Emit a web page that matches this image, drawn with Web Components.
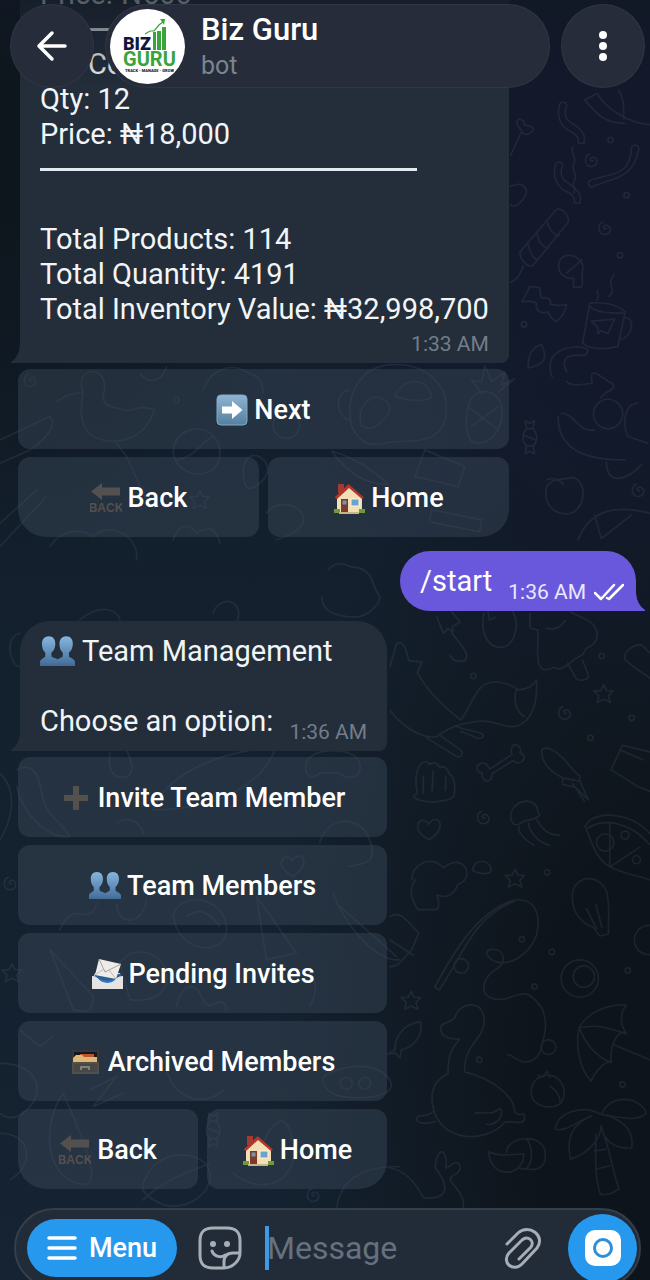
<!DOCTYPE html>
<html lang="en">
<head>
<meta charset="utf-8">
<meta name="viewport" content="width=device-width, initial-scale=1">
<title>Biz Guru</title>
<style>
    html, body {
        margin: 0;
        height: 100%;
        overflow: hidden;
        background: #111a25;
    }
    body {
        font-family: Roboto, "Noto Sans", sans-serif;
        color: #f2f5f8;
    }
    .indent { padding-left: 48px; }
    .emoji-line {
        display: flex;
        align-items: center;
        gap: 7px;
    }
</style>
</head>
<body>
<chat-screen>
    <chat-header slot="header" data-name="Biz Guru" data-status="bot"></chat-header>

    <message-group>
        <message-bubble data-time="1:33 AM">
            <div>Price: ₦500</div>
            <text-rule></text-rule>
            <div class="indent">Co</div>
            <div>Qty: 12</div>
            <div>Price: ₦18,000</div>
            <text-rule></text-rule>
            <br>
            <div>Total Products: 114</div>
            <div>Total Quantity: 4191</div>
            <div>Total Inventory Value: ₦32,998,700</div>
        </message-bubble>
        <key-row slot="keys"><key-button data-icon="next">Next</key-button></key-row>
        <key-row slot="keys" last>
            <key-button data-icon="back">Back</key-button>
            <key-button data-icon="home">Home</key-button>
        </key-row>
    </message-group>

    <message-group out>
        <message-bubble data-time="1:36 AM" out><div slot="last">/start</div></message-bubble>
    </message-group>

    <message-group>
        <message-bubble data-time="1:36 AM" first>
            <div class="emoji-line"><emoji-icon data-name="people" large></emoji-icon>Team Management</div>
            <br>
            <div slot="last">Choose an option:</div>
        </message-bubble>
        <key-row slot="keys"><key-button data-icon="plus">Invite Team Member</key-button></key-row>
        <key-row slot="keys"><key-button data-icon="people">Team Members</key-button></key-row>
        <key-row slot="keys"><key-button data-icon="mail">Pending Invites</key-button></key-row>
        <key-row slot="keys"><key-button data-icon="archive">Archived Members</key-button></key-row>
        <key-row slot="keys" last>
            <key-button data-icon="back">Back</key-button>
            <key-button data-icon="home">Home</key-button>
        </key-row>
    </message-group>

    <chat-composer slot="composer"></chat-composer>
</chat-screen>

<script>
    const EMOJI = {
        next: `
            <defs><linearGradient id="n" x2="0" y2="1"><stop stop-color="#8fb4d3"/><stop offset="1" stop-color="#54809f"/></linearGradient></defs>
            <rect x="1" y="1" width="30" height="30" rx="4" fill="url(#n)" stroke="#86a9c6"/>
            <path d="M6 12.500h10V7l10.500 9L16 25v-5.500H6z" fill="#fff"/>`,
        back: `
            <path d="M1 9.500 12 1v4.500h18v8H12V18z" fill="#54504f"/>
            <text x="16" y="30" text-anchor="middle" font-family="Liberation Sans Narrow, Liberation Sans" font-weight="bold" font-size="12" fill="#54504f">BACK</text>`,
        home: `
            <path d="M5 2h6v9H5z" fill="#a33a30"/>
            <path d="M4 15 16 4l13 11v15H4z" fill="#f3dfb6"/>
            <path d="M1.500 15.500 15.500 2 31 15.500l-2 1.500L16 6 4 17z" fill="#b3352c"/>
            <path d="M8 17h7v13H8z" fill="#7c3a2b"/><path d="M9.500 18.500h4v4h-4z" fill="#6f97b3"/>
            <path d="M17.500 16.500h9v8h-9z" fill="#fff3d8"/><path d="M18.500 17.500h7v6h-7z" fill="#6aa3cf"/>
            <path d="M1 27h6v4H1zm25 0h6v4h-6z" fill="#6f9a3c"/><path d="M6 30h20v2H6z" fill="#c9b48a"/>`,
        plus: `<path d="M13 4h6v9h9v6h-9v9h-6v-9H4v-6h9z" fill="#54504b"/>`,
        people: `
            <defs><linearGradient id="p" x2="0" y2="1"><stop stop-color="#86b6df"/><stop offset="1" stop-color="#446d99"/></linearGradient></defs>
            <g fill="url(#p)"><path d="M24 2c-4.500 0-6.500 3.500-6.200 7.500.2 3.500 1.200 6 3 7.500v3.500c-1.500 1.500-5 2-6.800 4.500V29h18v-3.500c-.5-3-4.500-3.500-5.500-5V17c2-1.500 3.200-4 3.500-7.500C30.300 5 28 2 24 2z"/>
            <path d="M8 2c-4.500 0-6.500 3.500-6.200 7.500.2 3.500 1.200 6 3 7.500v3.500C3.500 22.500 0 22.500 0 26v3h17.500v-4c-1-3-5.500-3-7-4.500V17c2-1.500 3.200-4 3.500-7.500C14.300 5 12 2 8 2z"/></g>
            <path d="M0 27h32v2H0z" fill="#446d99"/>`,
        mail: `
            <path d="M4 15h25l3 7v9H1v-9z" fill="#d5d5d3"/><path d="M4 16h26v7H3z" fill="#2d5f93"/>
            <path d="m8 1 22 5-5 15L4 17z" fill="#eeeceb"/><path d="m8 1 6 13L30 6" fill="none" stroke="#a5a19c"/><path d="m4 17 9-6m5 1 7 9" stroke="#bdb9b4"/>
            <path d="M1 18c5 0 6 3 8 4 4 3 10 3 14 0 2-1 4-4 9-4v13H1z" fill="#e5e4e2"/><path d="M7 20c5 3 12 4 18 0-2 6-14 7-18 0z" fill="#2e78c4"/>`,
        archive: `
            <path d="M2 4h27v24H2z" fill="#34383b"/><path d="M4 6h23v5H4z" fill="#15191c"/>
            <path d="M10 8h14v5H10z" fill="#c1532c"/><path d="M3 12l3-3h6l2 2h13v6H3z" fill="#dfb878"/><path d="M2 16h27v12H2z" fill="#514f4b"/>
            <path d="M4 18h23v8H4z" fill="#474744"/><path d="M11 24v-3h8v3" fill="none" stroke="#97928a" stroke-width="1.500"/>`
    };

    function setup(el, css, html) {
        el.attachShadow({ mode: "open" });
        el.shadowRoot.innerHTML = `<style>${css}</style>${html}`;
    }

    class EmojiIcon extends HTMLElement {
        connectedCallback() {
            setup(this, `
                :host { display: block; flex: none; width: 32px; height: 32px; }
                :host([large]) { width: 35px; height: 35px; }
                svg { display: block; width: 100%; height: 100%; }
            `, `<svg viewBox="0 0 32 32" aria-hidden="true">${EMOJI[this.dataset.name]}</svg>`);
        }
    }

    /* the line drawn between two products, as tall as a line of text */
    class TextRule extends HTMLElement {
        constructor() {
            super();
            setup(this, `
                :host { display: flex; align-items: center; height: 35px; }
                hr { flex: none; width: 84%; height: 3px; margin: 0; border: 0; background: #e3e9ee; }
            `, `<hr>`);
        }
    }

    class ChatWallpaper extends HTMLElement {
        constructor() {
            super();
            setup(this, `
                :host {
                    display: block;
                    background:
                        radial-gradient(ellipse 50% 34% at 0% 10%, #0e161d 20%, transparent),
                        radial-gradient(ellipse 60% 50% at 100% 10%, #13182b 30%, transparent),
                        radial-gradient(ellipse 60% 60% at 100% 85%, #0e141b 30%, transparent),
                        linear-gradient(#121b2a, #13202d 50%, #152332);
                }
                svg { display: block; width: 100%; height: 100%; fill: none; stroke: #6d7b98; stroke-width: 5; stroke-linecap: round; stroke-linejoin: round; opacity: .15; }
            `, `
            <svg viewBox="0 0 650 1280" preserveAspectRatio="xMidYMid slice" aria-hidden="true">
                <defs>
                    <path id="swirl" d="M5 2c-6 4-12-5-4-9s18 4 16 15-22 17-30 6-4-28 8-31"/>
                    <path id="star" d="m0-28 8 18 20 1-14 15 6 20-20-10-20 10 5-20-15-15 21-1z"/>
                    <path id="heart" d="M0 30c-22-12-40-28-34-46s26-14 32 0c8-18 30-20 34-4S22 16 0 30z"/>
                    <circle id="dot" r="8"/>
                    <path id="bone" d="m-40 34 66-44c-6-20 4-34 16-28s12 18 8 24c14 2 18 18 4 26s-20 0-24-4l-64 40c2 18-12 26-22 18s-8-16-6-20c-18-2-22-20-8-28s24 4 30 16z"/>
                    <path id="fish" d="M-40 50c-4-30 20-80 76-84 8 40-20 76-58 84l-4 24-14-14-22 2z"/>
                    <path id="ribbon" d="M-30-50c0-16 22-14 22 0-16 40 14 48 34 64s22 30 18 48h-16c0-20-6-26-26-36s-42-36-32-76z"/>
                    <path id="candy" d="m-14-50 14 8 14-8-4 24c16 20 12 40 0 52l4 24-14-8-14 8 4-24c-14-14-14-34 0-52zm4 24h20m-24 22 28 10m-24 20h20"/>
                </defs>
                <g transform="translate(390 610) scale(.333)">
                    <path d="M140 20l20 50 14-14 14 10 0-16 22-14-24-30M186 70c20 26 48 54 44 72s-40 16-50-6M282 10c-12 60 12 102 50 102s62-60 36-110M294 0l4 30 20-8M420 10v44l24 6c2 40-6 80 4 104s34 14 44 8c20 14 34-4 60-22s26-10 36-34c50-20 44-70-8-92l-38-18M470 54c26 10 46-6 56-22M534 160l24 44c12 14 40 4 38-8l-18-46"/>
                    <path d="M0 170l20-70c20-10 30 20 36 52l40 4-14 32c40 70 90 110 130 142 20-20 30-60 58-94s84-18 116 4c24-2 44-8 54-30 4 70-14 120-52 136s-74-18-122-12-70 12-90 24-30 14-34 22c-50 10-110-36-142-78M380 240c-12 30 2 70 24 80M110 384l90 56c18 6 20-14 12-20l-60-42M196 348c30 14 40 10 70 20s6 22-10 14l-44-18"/>
                    <use href="#bone" x="340" y="444"/><use href="#star" x="642" y="252"/><use href="#swirl" x="524" y="308"/><use href="#swirl" x="280" y="622"/><use href="#heart" x="118" y="660"/><use href="#star" x="376" y="806"/>
                    <path d="M82 550c-10-44 0-80 14-90s20 0 22 4c14-12 28 0 30 8 18-4 26 6 28 18 18 8 22 40 16 70-20 18-80 20-106 10s-10-14-4-20zm18 0v-50m26 44 4-60m36 58 2-40"/>
                    <path d="M456 420c20-20 60 20 80 44s22 26 34 34v16l26 56-40-38-38-8v-20c-50-26-66-58-62-84zm62 84 50 10m-20 6 36 54"/>
                    <path d="M364 630c-10-40 40-72 70-48 16 16 4 22 16 34-20 20-50 12-56 24-14 8-24 8-30-10zm24 20c-8 20 30 50 44 56m-16-66c0 24 30 60 64 66m-40-78c10 20 30 50 70 48"/>
                    <path d="M706 150c-6-20 14-44 48-46l26 24M706 150l30 24 44 30M664 480l34-74 82 20M664 480l80 50 36 14M690 420l70 30"/>
                    <path d="M586 650c24-50 130-46 194 20M586 650c14 30 30 100 76 122 40 20 80 26 118 38M596 654c40-26 120-24 184 50M660 642v130l90-60"/><circle cx="646" cy="698" r="26"/><circle cx="706" cy="676" r="12"/><circle cx="740" cy="750" r="12"/>
                    <path d="M66 810c0-50 60-74 94-36 60-50 100 30 44 50-14 40-44 40-64 32 10 20 6 40 0 44H84c-20-30-30-60-8-90M248 780c6-34 50-34 56 0 0 20-50 10-56 0z"/>
                    <use href="#dot" x="250" y="198"/><use href="#dot" x="602" y="384"/><use href="#dot" x="726" y="324"/><use href="#dot" x="472" y="788"/><use href="#dot" x="636" y="138"/>
                </g>
                <g transform="translate(390 900) scale(.333)">
                    <path d="M134 262c60-110 130-230 240-262 80-10 80 80 60 120s-60 70-100 68-60-40-26-40 46 40 10 60-60 80 0 90 80-60 140 30c20 60 0 90-4 116s-30 50-60 40-24-20-42-20M134 262l14 8c70-100 100-220 226-266"/><circle cx="214" cy="198" r="22"/><circle cx="476" cy="442" r="22"/>
                    <path d="M548-20c-6 60 32 92 62 102l20 26 26-6v-30c0-40 4-50-4-92-20-64-98-54-104 0zM590 26l30 60m-2-74 18 70"/><circle cx="570" cy="236" r="56"/><circle cx="582" cy="230" r="32"/><circle cx="778" cy="120" r="44"/>
                    <path d="M152 386c0-20 30-16 44-34 6-40 80-60 86 4s-60 70-58 160c80 20 150 70 150 120 20 20 30-8 30 18s-40 6-60 14c-60 70-220 60-218-80 6-40 20-50 48-66 0-60 10-70 34-104-30 0-56-6-56-32zm-24 250c-20 20-50 4-48 22s40 12 56 8M256 640c20-6 50 10 74-14 14 10 0 50-40 48"/>
                    <path d="M568 384c20-40 80-74 142-68-20 20-20 60 0 84-20-10-50 20-46 88-20-6-50 30-60 56-30-30-50-100-36-160zm0 0c50-12 90 0 142 18M568 384c24 60 60 90 96 104M670 434l110 46"/>
                    <path d="M424 576c0-50 60-60 80-40s26 50 10 72-90 20-90-32zm20-50 14 6 14-18 8 18M480 560c20 10 30 30 32 50"/>
                    <path d="M634 644c-50-30-130-10-138 44 30 10 60-20 110-40-50 20-80 60-64 130 40-10 90-50 92-100 10 60 60 70 92 66 10-60-40-90-90-100 20-60 110-60 134-4-30 30-90 10-134 4zm-16 60c0 70-4 130 14 180 30 0 30 0 56-16-20-50-20-90-46-164m-28 50 34-6m-28 60 40-10"/>
                    <path d="M296 756c30 14 70 10 106 6 0 70-100 80-106-6zm54 2c0-50 110-60 116 0s-40 54-76 48m20-90c20 30 20 70 0 90M0 804c50 10 80 50 100 90 100 10 60-60 36-90 0-30 20-70 30-34 10 20-10 50 14 28s44 4 20 24c-30 14-20 20 0 44s22 40 20 60"/>
                    <use href="#star" x="64" y="302"/><use href="#fish" x="56" y="400"/><path d="M0 50c30-20 50 10 86 50-20 40-10 40-30 60s-30 40-56 40M0 120l70 46"/>
                    <use href="#dot" x="396" y="118"/><use href="#dot" x="434" y="260"/><use href="#dot" x="268" y="480"/><use href="#dot" x="486" y="156"/><use href="#dot" x="714" y="212"/><use href="#dot" x="698" y="554"/>
                </g>
                <g transform="translate(490 90) scale(.333)">
                    <path d="M62 196l34-74c-20-16-18-36-6-34s14 8 12 16c20 4 40 10 20 24s-20-4-24 2M62 290c40-20 60 10 36 40s-36 14-36 14"/>
                    <use href="#ribbon" x="238" y="98"/><use href="#ribbon" x="226" y="278"/><path d="M250 170c-14 20 14 30 2 50s14 30 2 50 6 30-2 40M426 170c14-10 24 0 20 12-20 90-80 80-140 110-20-10-10-20 4-24 80-20 110-20 116-98zM284 30l38-20c20 40 90 90 158 94M284 30c30 30 50 70 120 70M386 0c20 30 14 60 16 86"/>
                    <path d="M90 486 200 358c24-4 40 26 34 40L128 528c-20 4-38-20-38-42zm24-30c0 20 14 50 28 54m0-84c0 30 20 50 34 48m-4-84c0 20 20 50 36 46M100 528c-10 30-20 40-38 50"/>
                    <path d="M206 530c0-50 70-40 74 4-10 20 4 40-6 58h-24l2-26c-24 0-46-10-46-36zm24 20 46-40M96 636l24-46 30 4c0 20 0 20 4 30 30-4 30 10 26 20 20 0 20 8 50 0-4 26-16 40-30 52-20-10-20-20-26-30-20 8-40-4-34-26-14-10-20-4-44-4zM300 640l-22 120c20 20 70 20 106 10l22-104c-26-24-70-30-106-26zm0 10c20 20 60 20 100 20m6 14c34 0 20 60-16 66M304 694l70-6-20 44-20-10-10 10v-20zM356 620c30-20-10-30 16-66M320 630c14-20-4-14 4-30"/>
                    <use href="#swirl" x="304" y="210"/><use href="#swirl" x="344" y="414"/><use href="#dot" x="362" y="150"/><use href="#dot" x="410" y="316"/><use href="#dot" x="390" y="496"/><use href="#dot" x="102" y="704"/>
                </g>
                <g transform="translate(325 340) scale(.333)">
                    <path d="M80 260c-20-90 20-180 120-186s170 60 164 140-60 90-130 90-110 40-154-44zm30 0c-20-60 30-100 60-86s30 40 10 60-30 40-70 26zm100-90c20-60 100-60 110 0-20 20-80 10-110 0M70 150c-40 10-40 70 0 90"/>
                    <path d="M430 200c10-60 90-60 100 0s-30 110-70 110-40-60-30-110zm10 60 80-60m-90 0 90 70M470 160l-30-40 30 6 10-50 20 50 40-30-10 40 40-20-50 40"/>
                    <path d="M682 110c-30-80 60-100 104-84 8 10 0 18-10 20-50-4-70 10-50 50M610 84c0-40 10-60 40-70 20 40 10 60-40 70M726 124c10 16 40 10 76 6-10-60 20-20 60 0 20 20-20 20-34 44M700 230c0 100 80 130 200 130M710 220c40 0 50 60 100 50"/><circle cx="850" cy="222" r="44"/><path d="M940 190c-40 0-50 60-30 100l60 20M845 365c0 80 70 50 105 10"/>
                    <use href="#candy" x="615" y="292"/><path d="M666 440c20-30 60-20 80-28 50 20 30 110-20 110s-70-40-60-82zm0-20c20-10 40 0 50 14M760 600c30-80 100-110 215-80M810 526l20 70 90-70"/><use href="#swirl" x="940" y="450"/>
                    <path d="M20 334c80 20 150 80 170 100-60 0-120-30-170-100zM300 330l120 50-20 60-130-30zM320 510l150 30-6 36-150-30zM10 690c30-40 70 0 80-8 60 10 50 60 70 80s-30 70-70 70-100-10-100-60"/>
                </g>
                <g transform="translate(0 340) scale(.333)">
                    <path d="M170 186c40-30 60-24 80-30-30-70 70-90 64-6-20 60 40 50 60 60s40-20 90 0c-20 60-60 90-120 94-100 0-110-70-94-150M350 310l30 40 60 130M420 100c30 40 70 20 80-20M520 340c0-90 130-100 140-10s-120 100-140 10zm10 20c60-10 80-60 110-70M610 150c20-60 80-80 120-60s60 20 60 70M0 300l150-70c20 20 0 60-60 100L0 370M-10 560l120-110M0 620l140-150M150 620c40-60 100-50 130-30 50-50 140 0 130 70M520 600c20-60 60-40 70-20 30-20 60-20 70 30M730 390c10-90 110-20 60 30s-60 20-60-30zM800 520c30-40 100-30 110 10s-50 60-80 70"/>
                    <use href="#swirl" x="90" y="120"/><use href="#star" x="600" y="480"/><use href="#dot" x="530" y="180"/><circle cx="860" cy="255" r="40"/>
                </g>
                <g transform="translate(0 610) scale(.333)">
                    <path d="M50 480c60-30 70 40 80 90s60 70 80 110c-60 10-140-60-160-150M330 430c-10 60 20 80 50 70s10-60 0-80M460 600c30-90 160-170 370-190-40 110-170 190-370 190zM920 460c10-50 150-50 160 0s-40 50-60 30h-60c-20 20-50 10-40-30zM350 640c30-20 70-10 80 30M960 700c20-80 120-90 150-10s-30 70-60 80M0 490c60 60 30 150 0 200M60 70c-50 10-30 100 0 100M240 30c70-60 120-20 120 0M640 10c20-60 100-40 70 30"/>
                    <path d="M180 960c40-100 90 0 110-80M350 880c0 70 80 70 90-10M520 920c20-80 150-60 160 30s-140 90-160-30zm40 0c40-30 70-10 100 30M770 860l120 170-90 20zM1000 850c50 130 150 210 200 200M1010 880l180 160M150 1020l130 140c0 50-20 50-60 40zM360 1060c40-60 130-30 140 30s-40 90-110 80zM900 1080c50 0 60 60 30 110M530 1190c20-80 60-70 80-20s60-30 70 30"/>
                    <use href="#swirl" x="30" y="820"/><use href="#star" x="36" y="1090"/><use href="#heart" x="880" y="770"/>
                </g>
                <g transform="translate(0 1030) scale(.333)">
                    <path d="M0 100c100 0 140 70 90 130S0 250 0 250M60 0l60 50 40-30M190 190c-60 80-60 240 40 270s10-150-40-270zM270 180l80-40-70 90 90-40M500 110c10 90 110 130 170 70M990 130c60-30 150-30 180 20s-80 60-140 50-80-60-40-70zM0 310c90 0 110 90 30 140M440 440c40-90 180-80 190-10s-90 120-150 90-60-50-40-80M700 430c80 70 200 30 180-90s-70-50-90 0M1010 540c10-80 60-130 190-130M430 510c60-60 130-80 200-110"/>
                    <use href="#swirl" x="940" y="495"/><use href="#candy" x="640" y="300"/><circle cx="1040" cy="160" r="18"/><circle cx="1095" cy="160" r="18"/>
                </g>
            </svg>`);
        }
    }

    class ChatScreen extends HTMLElement {
        constructor() {
            super();
            setup(this, `
                :host { display: flex; flex-direction: column; position: relative; height: 100vh; overflow: hidden; isolation: isolate; }
                chat-wallpaper { position: absolute; inset: 0; z-index: -1; }
                .header { position: absolute; top: 0; left: 0; right: 0; z-index: 2; }
                main {
                    flex: 1;
                    min-height: 0;
                    display: flex;
                    flex-direction: column;
                    justify-content: flex-end;
                    padding: 0 14px 19px 18px;
                }
            `, `
                <chat-wallpaper></chat-wallpaper>
                <div class="header"><slot name="header"></slot></div>
                <main><slot></slot></main>
                <slot name="composer"></slot>
            `);
        }
    }

    class ChatHeader extends HTMLElement {
        connectedCallback() {
            setup(this, `
                :host {
                    display: flex;
                    gap: 11px;
                    padding: 4px 5px 0 10px;
                    background: linear-gradient(rgba(17, 24, 36, .7), transparent);
                }
                button, .title {
                    box-sizing: border-box;
                    height: 84px;
                    border: 1px solid rgba(255, 255, 255, .05);
                    border-radius: 42px;
                    background: #262c39;
                }
                button { display: flex; align-items: center; justify-content: center; flex: none; width: 84px; padding: 0; color: #fff; }
                .title { flex: 1; min-width: 0; display: flex; align-items: center; gap: 16px; padding-left: 4px; }
                .logo { flex: none; width: 75px; height: 75px; }
                .names { padding-top: 4px; }
                h1, p { margin: 0; font-size: 31px; line-height: 36px; font-weight: 500; color: #fff; }
                p { font-size: 25px; font-weight: 400; color: #7b8491; }
            `, `
                <button type="button" aria-label="Go back">
                    <svg width="32" height="32" viewBox="0 0 32 32" fill="none" stroke="currentColor" stroke-width="3.500" stroke-linecap="round" stroke-linejoin="round"><path d="M29 16H3M16 3 3 16l13 13"/></svg>
                </button>
                <div class="title">
                    <svg class="logo" viewBox="0 0 75 75" role="img" aria-label="Logo">
                        <circle cx="37.500" cy="37.500" r="37.500" fill="#fff"/>
                        <path d="M43 23h3v18h-3zm4-1h4v19h-4zm5-4h4v23h-4z" fill="#39a43b"/>
                        <path d="m35 25 5-3 4 0 5-6 5-4" fill="none" stroke="#39a43b" stroke-width="1.200"/><path d="m50 10 5 0-1 6z" fill="#39a43b"/>
                        <text x="13" y="41" font-family="Roboto" font-weight="900" font-size="18" fill="#13183a">BIZ</text>
                        <text x="13" y="57" font-family="Roboto" font-weight="700" font-size="20" fill="#39a43b">GURU</text>
                        <text x="15" y="63" font-family="Roboto" font-weight="900" font-size="4" fill="#222">TRACK - MANAGE - GROW</text>
                    </svg>
                    <div class="names"><h1>${this.dataset.name}</h1><p>${this.dataset.status}</p></div>
                </div>
                <button type="button" aria-label="More">
                    <svg width="8" height="30" viewBox="0 0 8 30" fill="currentColor"><circle cx="4" cy="4" r="4"/><circle cx="4" cy="15" r="4"/><circle cx="4" cy="26" r="4"/></svg>
                </button>
            `);
        }
    }

    class MessageGroup extends HTMLElement {
        constructor() {
            super();
            setup(this, `
                :host { display: block; flex: none; width: fit-content; margin-top: 10px; }
                :host([out]) { align-self: flex-end; margin-top: 14px; }
                .keys { display: flex; flex-direction: column; gap: 8px; margin-top: 6px; }
                :host([out]) .keys { display: none; }
            `, `<slot></slot><div class="keys"><slot name="keys"></slot></div>`);
        }
    }

    class MessageBubble extends HTMLElement {
        connectedCallback() {
            const out = this.hasAttribute("out");
            const ticks = `<svg class="ticks" width="30" height="20" viewBox="0 0 30 20" fill="none" stroke="#fff" stroke-width="2.500" stroke-linecap="round" stroke-linejoin="round"><path d="m1 11 6 6L20 3M13 16l2 1L29 3"/></svg>`;
            setup(this, `
                :host {
                    --bubble: #232e3a;
                    display: block;
                    position: relative;
                    margin-left: 2px;
                    padding: 13px 20px 7px;
                    border-radius: 8px 8px 8px 0;
                    background: var(--bubble);
                    font-size: 29px;
                    line-height: 35px;
                    white-space: nowrap;
                }
                :host([first]) { border-radius: 30px 30px 8px 0; }
                :host([out]) {
                    --bubble: #6a58dc;
                    margin: 0;
                    padding-right: 12px;
                    border-radius: 30px 30px 0 30px;
                    color: #fff;
                }
                .last { display: flex; align-items: flex-end; gap: 16px; padding-top: 5px; }
                ::slotted([slot="last"]) { margin: -5px 0 5px; }
                .meta { display: flex; align-items: center; gap: 8px; margin-left: auto; font-size: 21px; line-height: 24px; color: #727d89; }
                :host([out]) .meta { color: #ebe8ff; }
                /* the tail hangs outside the corner of the bubble */
                .tail { position: absolute; bottom: 0; right: 100%; fill: var(--bubble); }
                :host([out]) .tail { right: auto; left: 100%; transform: scaleX(-1); }
            `, `
                <slot></slot>
                <div class="last">
                    <slot name="last"></slot>
                    <div class="meta"><time>${this.dataset.time}</time>${out ? ticks : ""}</div>
                </div>
                <svg class="tail" width="9" height="20" viewBox="0 0 9 20"><path d="M9 2v18H0v-1Q8 14 9 2z"/></svg>
            `);
        }
    }

    class KeyRow extends HTMLElement {
        constructor() {
            super();
            setup(this, `
                :host { display: grid; grid-auto-flow: column; grid-auto-columns: 1fr; gap: 9px; }
                :host([last]) ::slotted(:first-child) { --bottom-left: 28px; }
                :host([last]) ::slotted(:last-child) { --bottom-right: 28px; }
            `, `<slot></slot>`);
        }
    }

    class KeyButton extends HTMLElement {
        connectedCallback() {
            setup(this, `
                :host { display: block; }
                button {
                    display: flex;
                    align-items: center;
                    justify-content: center;
                    gap: 6px;
                    box-sizing: border-box;
                    width: 100%;
                    height: 80px;
                    padding: 2px 0 0;
                    border: 0;
                    border-radius: 12px 12px var(--bottom-right, 12px) var(--bottom-left, 12px);
                    background: rgba(62, 76, 92, .42);
                    font: 500 27px Roboto, "Noto Sans", sans-serif;
                    color: #fff;
                    white-space: nowrap;
                }
            `, `<button type="button"><emoji-icon data-name="${this.dataset.icon}"></emoji-icon><span><slot></slot></span></button>`);
        }
    }

    class ChatComposer extends HTMLElement {
        constructor() {
            super();
            setup(this, `
                :host {
                    display: flex;
                    align-items: center;
                    flex: none;
                    box-sizing: border-box;
                    height: 80px;
                    margin: 0 9px -8px 14px;
                    padding: 0 2px 0 11px;
                    border: 2px solid #353f4a;
                    border-radius: 40px;
                    background: #222c39;
                }
                button { display: flex; align-items: center; justify-content: center; flex: none; padding: 0; border: 0; background: none; color: #a8adb6; }
                .menu {
                    gap: 12px;
                    width: 150px;
                    height: 58px;
                    margin-right: 21px;
                    border-radius: 29px;
                    background: #2699ee;
                    font: 500 27px Roboto, "Noto Sans", sans-serif;
                    color: #fff;
                }
                .camera { width: 69px; height: 69px; margin-left: 26px; border-radius: 50%; background: #2699ee; }
                label { display: flex; align-items: center; flex: 1; min-width: 0; margin-left: 23px; }
                .caret { flex: none; width: 4px; height: 44px; margin-right: -2px; background: #3d9be6; }
                input { flex: 1; min-width: 0; padding: 0; border: 0; outline: 0; background: none; font: 32px Roboto, "Noto Sans", sans-serif; color: #fff; }
                input::placeholder { color: #66717f; opacity: 1; }
            `, `
                <button class="menu" type="button">
                    <svg width="30" height="24" viewBox="0 0 30 24" stroke="currentColor" stroke-width="3.500" stroke-linecap="round"><path d="M2 2h26M2 12h26M2 22h26"/></svg>
                    <span>Menu</span>
                </button>
                <button type="button" aria-label="Stickers">
                    <svg width="44" height="44" viewBox="0 0 44 44" fill="none" stroke="currentColor" stroke-width="3" stroke-linecap="round" stroke-linejoin="round">
                        <path d="M26 42H15C6 42 2 38 2 29V15C2 6 6 2 15 2h14c9 0 13 4 13 13v12c0 8-8 15-16 15zM26 42v-6c0-6 3-9 9-9h6"/>
                        <path d="M14 25c2 6 10 7 13 4"/><circle cx="15" cy="18" r="1.500" fill="currentColor"/><circle cx="29" cy="18" r="1.500" fill="currentColor"/>
                    </svg>
                </button>
                <label><span class="caret"></span><input type="text" placeholder="Message" aria-label="Message"></label>
                <button type="button" aria-label="Attach">
                    <svg width="38" height="42" viewBox="0 0 38 42" fill="none" stroke="currentColor" stroke-width="3" stroke-linecap="round"><path d="M3 17 14 6C25-4 42 9 33 21L18 37C9 46-3 35 5 26L18 13c6-5 13 1 9 7L15 32"/></svg>
                </button>
                <button class="camera" type="button" aria-label="Camera">
                    <svg width="36" height="36" viewBox="0 0 36 36"><rect width="36" height="36" rx="10" fill="#fff"/><circle cx="18" cy="18" r="8.500" fill="none" stroke="#2d8fda" stroke-width="3"/></svg>
                </button>
            `);
        }
    }

    customElements.define("emoji-icon", EmojiIcon);
    customElements.define("text-rule", TextRule);
    customElements.define("chat-wallpaper", ChatWallpaper);
    customElements.define("chat-screen", ChatScreen);
    customElements.define("chat-header", ChatHeader);
    customElements.define("message-group", MessageGroup);
    customElements.define("message-bubble", MessageBubble);
    customElements.define("key-row", KeyRow);
    customElements.define("key-button", KeyButton);
    customElements.define("chat-composer", ChatComposer);
</script>
</body>
</html>
